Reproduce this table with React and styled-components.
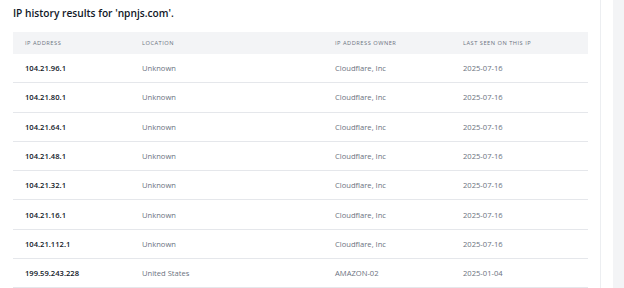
import styled, { createGlobalStyle } from "styled-components";

const GlobalStyle = createGlobalStyle`
  html, body {
    margin: 0;
    padding: 0;
    background: #ffffff;
  }
  body {
    font-family: "Open Sans", "Noto Sans", sans-serif;
    -webkit-font-smoothing: antialiased;
  }
`;

const Page = styled.div`
  display: flex;
  width: 624px;
  height: 288px;
  overflow: hidden;
`;

const Main = styled.div`
  width: 587px;
  flex: none;
  padding: 0 12px 0 13px;
  border-right: 1px solid #eceef1;
  box-sizing: content-box;
  width: 575px;
`;

const Aside = styled.div`
  flex: 1;
  margin-left: 12px;
  background: #f3f4f6;
`;

const Title = styled.h2`
  margin: 0;
  padding-top: 6px;
  height: 26px;
  font-size: 10.2px;
  font-weight: 600;
  color: #111827;
  line-height: 14px;
`;

const Row = styled.div`
  display: grid;
  grid-template-columns: 117px 193px 128px 1fr;
  align-items: center;
  height: ${(p) => (p.$head ? "22px" : "28.3px")};
  background: ${(p) => (p.$head ? "#f3f4f6" : "transparent")};
  border-bottom: ${(p) => (p.$head ? "none" : "1px solid #e5e7eb")};
`;

const HeadCell = styled.div`
  padding-left: 12px;
  font-size: 5.7px;
  letter-spacing: 0.5px;
  text-transform: uppercase;
  color: #6b7280;
  font-weight: 500;
`;

const Cell = styled.div`
  padding-left: 12px;
  font-size: 7.6px;
  color: ${(p) => (p.$strong ? "#111827" : "#6b7280")};
  font-weight: ${(p) => (p.$strong ? 600 : 400)};
  white-space: nowrap;
`;

const rows = [
  ["104.21.96.1", "Unknown", "Cloudflare, Inc", "2025-07-16"],
  ["104.21.80.1", "Unknown", "Cloudflare, Inc", "2025-07-16"],
  ["104.21.64.1", "Unknown", "Cloudflare, Inc", "2025-07-16"],
  ["104.21.48.1", "Unknown", "Cloudflare, Inc", "2025-07-16"],
  ["104.21.32.1", "Unknown", "Cloudflare, Inc", "2025-07-16"],
  ["104.21.16.1", "Unknown", "Cloudflare, Inc", "2025-07-16"],
  ["104.21.112.1", "Unknown", "Cloudflare, Inc", "2025-07-16"],
  ["199.59.243.228", "United States", "AMAZON-02", "2025-01-04"],
];

export default function App() {
  return (
    <>
      <GlobalStyle />
      <Page>
        <Main>
          <Title>IP history results for 'npnjs.com'.</Title>
          <Row $head>
            <HeadCell>IP Address</HeadCell>
            <HeadCell>Location</HeadCell>
            <HeadCell>IP Address Owner</HeadCell>
            <HeadCell>Last seen on this IP</HeadCell>
          </Row>
          {rows.map((r) => (
            <Row key={r[0]}>
              <Cell $strong>{r[0]}</Cell>
              <Cell>{r[1]}</Cell>
              <Cell>{r[2]}</Cell>
              <Cell>{r[3]}</Cell>
            </Row>
          ))}
        </Main>
        <Aside />
      </Page>
    </>
  );
}
